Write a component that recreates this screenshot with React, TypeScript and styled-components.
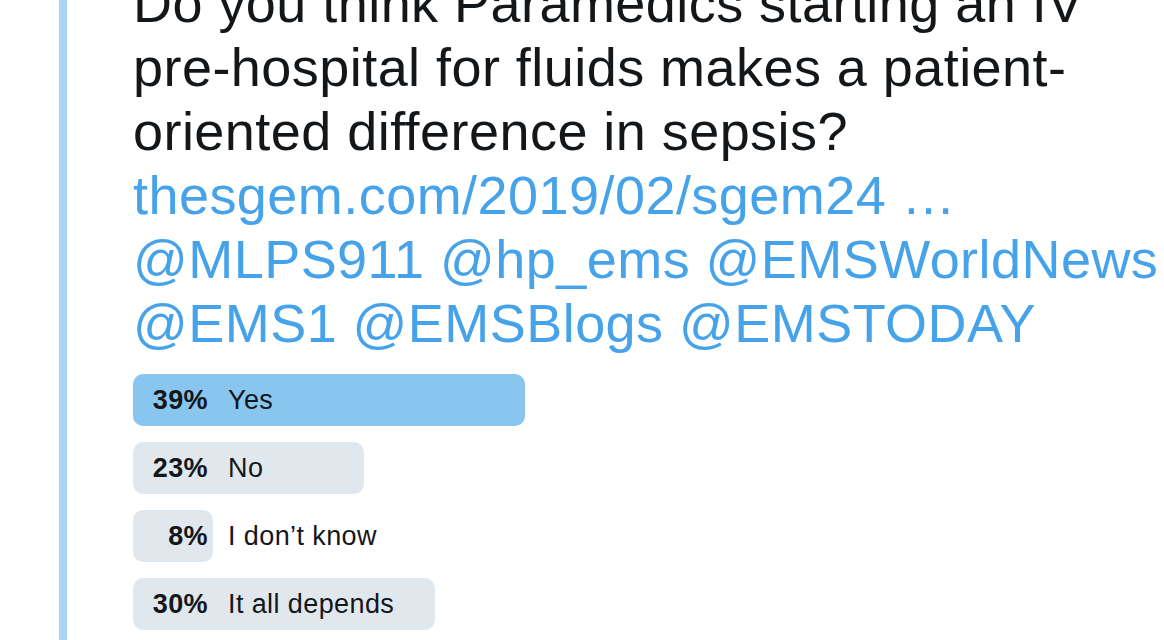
import { FC } from "react"
import styled, { createGlobalStyle } from "styled-components"

const GlobalStyle = createGlobalStyle`
    html, body {
        margin: 0;
        padding: 0;
        background: #ffffff;
        overflow: hidden;
    }
    body {
        font-family: "Liberation Sans", Arial, Helvetica, sans-serif;
        color: #14171a;
    }
`

const Page = styled.div`
    width: 1164px;
    height: 640px;
    overflow: hidden;
`

const Quote = styled.div`
    margin: -29px 0 0 59px;
    border-left: 8px solid #acd5f5;
    padding-left: 66px;
    min-height: 700px;
`

const TweetText = styled.p`
    margin: 0;
    width: 1031px;
    font-size: 54px;
    line-height: 64px;
    letter-spacing: 0.45px;
    color: #14171a;
`

const Link = styled.span`
    color: #47a3e9;
`

const Poll = styled.ul`
    list-style: none;
    margin: 19px 0 0;
    padding: 0;
    width: 1005px;
    display: flex;
    flex-direction: column;
    gap: 16px;
`

const Choice = styled.li`
    position: relative;
    height: 52px;
    display: flex;
    align-items: center;
    font-size: 27px;
    letter-spacing: 0.4px;
`

const Fill = styled.div<{ $leading: boolean }>`
    position: absolute;
    left: 0;
    top: 0;
    bottom: 0;
    border-radius: 10px;
    background: ${({ $leading }) => ($leading ? "#88c5ef" : "#e1e8ed")};
`

const Percent = styled.span`
    position: relative;
    width: 75px;
    text-align: right;
    font-weight: 700;
`

const Label = styled.span`
    position: relative;
    margin-left: 20px;
`

const choices = [
    { pct: 39, label: "Yes" },
    { pct: 23, label: "No" },
    { pct: 8, label: "I don’t know" },
    { pct: 30, label: "It all depends" },
]

const App: FC = () => {
    const top = Math.max(...choices.map(c => c.pct))

    return (
        <Page>
            <GlobalStyle />
            <Quote>
                <TweetText>
                    Do you think Paramedics starting an IV pre-hospital for fluids makes a patient-oriented difference in sepsis?{" "}
                    <Link>thesgem.com/2019/02/sgem24 …</Link>{" "}
                    <Link>@MLPS911</Link> <Link>@hp_ems</Link> <Link>@EMSWorldNews</Link>{" "}
                    <Link>@EMS1</Link> <Link>@EMSBlogs</Link> <Link>@EMSTODAY</Link>
                </TweetText>
                <Poll>
                    {choices.map(c => (
                        <Choice key={c.label}>
                            <Fill $leading={c.pct === top} style={{ width: `${c.pct}%` }} />
                            <Percent>{c.pct}%</Percent>
                            <Label>{c.label}</Label>
                        </Choice>
                    ))}
                </Poll>
            </Quote>
        </Page>
    )
}

export default App
